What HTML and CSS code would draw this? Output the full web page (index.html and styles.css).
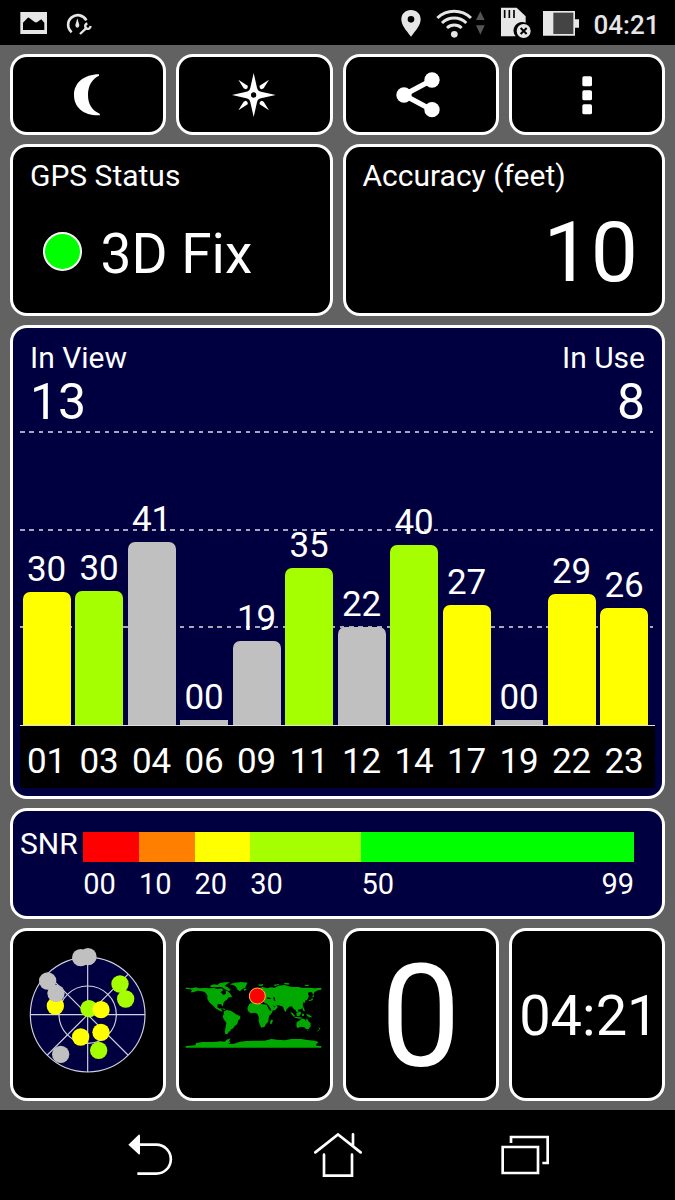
FILE: index.html
```html
<!DOCTYPE html>
<html lang="en">
  <head>
    <meta charset="UTF-8" />
    <meta name="viewport" content="width=device-width, initial-scale=1.0" />
    <title>GPS Status</title>
    <link rel="stylesheet" href="styles.css">
  </head>
  <body>
    <header class="status">
      <svg class="status__icon status__icon--image" viewBox="60 0 82 135">
        <path fill-rule="evenodd" d="M61 36H142V102H61ZM69 90H133V68L124 58L116 63Q110 70 104 66L88 54Q85 51 82 55L69 68Z" />
      </svg>
      <svg class="status__icon status__icon--gauge" viewBox="197 0 78 135">
        <path class="line" stroke-width="8" d="M214 97A29 29 0 1 1 258 61" />
        <path d="M231 55L237 75Q237 83 231 83Q225 83 225 75Z" />
        <path class="line" stroke-width="7" d="M239 102L257 85" />
        <path class="line" stroke-width="7" d="M261 70Q253 73 255 81Q258 89 266 86Q270 84 271 78" />
      </svg>
      <svg class="status__icon status__icon--pin" viewBox="197 0 60 135">
        <path fill-rule="evenodd" d="M227 30C210 30 198 42 198 58C198 75 211 90 227 110C243 90 256 75 256 58C256 42 244 30 227 30ZM227 48A10 10 0 1 1 227 68A10 10 0 1 1 227 48Z" />
      </svg>
      <svg class="status__icon status__icon--wifi" viewBox="303 0 109 135">
        <path class="line" stroke-width="9" d="M307 54A73 73 0 0 1 408 54M321 69A52 52 0 0 1 394 69M336 84A32 32 0 0 1 380 84" />
        <circle cx="358" cy="103" r="10" />
      </svg>
      <svg class="status__icon status__icon--arrows" viewBox="424 0 26 135">
        <path fill="#555" d="M437 34L450 60H424ZM437 104L450 76H424Z" />
      </svg>
      <svg class="status__icon status__icon--sd" viewBox="497 0 90 135">
        <path d="M497 23H544L571 49V68A26 26 0 0 0 541 109H497Z" />
        <path stroke="#000" stroke-width="5" d="M508 30V54M522 30V54M536 30V54" />
        <circle cx="565" cy="93" r="21" />
        <path stroke="#000" stroke-width="6" d="M556 84L574 102M574 84L556 102" />
      </svg>
      <svg class="status__icon status__icon--battery" viewBox="623 0 108 135">
        <path d="M623 33H719V58H731V83H719V107H623Z" />
        <path fill="#444" d="M654 38H714V102H654Z" />
      </svg>
      <span class="status__clock">04:21</span>
    </header>

    <main class="board">
      <button class="panel panel--btn" aria-label="Night mode">
        <svg class="icon" viewBox="186 212 156 144">
          <path d="M297 222C252 222 222 248 222 284C222 322 252 347 300 345L299 340C276 331 264 311 264 284C264 255 277 235 297 226Z" />
        </svg>
      </button>
      <button class="panel panel--btn" aria-label="Compass">
        <svg class="icon" viewBox="685 212 156 144">
          <path fill-rule="evenodd" d="M762 218L772 262Q774 272 784 274L828 284L784 294Q774 296 772 306L762 350L752 306Q750 296 740 294L697 284L740 274Q750 272 752 262ZM762 276A8 8 0 1 0 762 292A8 8 0 1 0 762 276Z" />
          <path d="M716 238L744 256Q746 265 738 267L732 264ZM808 238L780 256Q778 265 786 267L792 264ZM716 330L744 312Q746 303 738 301L732 304ZM808 330L780 312Q778 303 786 301L792 304Z" />
        </svg>
      </button>
      <button class="panel panel--btn" aria-label="Share">
        <svg class="icon" viewBox="179 212 156 144">
          <path class="line" stroke="#fff" stroke-width="16" d="M290 239L206 284L290 329" />
          <circle cx="290" cy="239" r="23" />
          <circle cx="206" cy="284" r="23" />
          <circle cx="290" cy="328" r="23" />
        </svg>
      </button>
      <button class="panel panel--btn" aria-label="Menu">
        <svg class="icon" viewBox="677 212 156 144">
          <rect x="741" y="228" width="29" height="30" rx="5" />
          <rect x="741" y="270" width="29" height="30" rx="5" />
          <rect x="741" y="312" width="29" height="30" rx="5" />
        </svg>
      </button>

      <section class="panel panel--info">
        <h2 class="label">GPS Status</h2>
        <div class="fix"><span class="fix__light"></span>3D Fix</div>
      </section>
      <section class="panel panel--info">
        <h2 class="label">Accuracy (feet)</h2>
        <div class="accuracy">10</div>
      </section>

      <section class="panel panel--wide chart">
        <div class="chart__head">
          <div>
            <h2 class="label">In View</h2>
            <div class="chart__count">13</div>
          </div>
          <div class="chart__used">
            <h2 class="label">In Use</h2>
            <div class="chart__count">8</div>
          </div>
        </div>
        <div class="chart__plot">
          <div class="sat">30<div class="bar bar--yellow" style="height: 133.5px"></div></div>
          <div class="sat">30<div class="bar bar--lime" style="height: 134.5px"></div></div>
          <div class="sat">41<div class="bar" style="height: 183px"></div></div>
          <div class="sat">00<div class="bar bar--none" style="height: 5px"></div></div>
          <div class="sat">19<div class="bar" style="height: 84.5px"></div></div>
          <div class="sat">35<div class="bar bar--lime" style="height: 157px"></div></div>
          <div class="sat">22<div class="bar" style="height: 98.5px"></div></div>
          <div class="sat">40<div class="bar bar--lime" style="height: 180.5px"></div></div>
          <div class="sat">27<div class="bar bar--yellow" style="height: 120.5px"></div></div>
          <div class="sat">00<div class="bar bar--none" style="height: 5px"></div></div>
          <div class="sat">29<div class="bar bar--yellow" style="height: 131.5px"></div></div>
          <div class="sat">26<div class="bar bar--yellow" style="height: 117.5px"></div></div>
        </div>
        <div class="chart__axis">
          <span>01</span>
          <span>03</span>
          <span>04</span>
          <span>06</span>
          <span>09</span>
          <span>11</span>
          <span>12</span>
          <span>14</span>
          <span>17</span>
          <span>19</span>
          <span>22</span>
          <span>23</span>
        </div>
      </section>

      <section class="panel panel--wide snr">
        <h2 class="snr__title">SNR</h2>
        <div class="snr__scale">
          <div class="snr__step snr__step--red">00</div>
          <div class="snr__step snr__step--orange">10</div>
          <div class="snr__step snr__step--yellow">20</div>
          <div class="snr__step snr__step--lime">30</div>
          <div class="snr__step snr__step--green"><span>50</span><span>99</span></div>
        </div>
      </section>

      <section class="panel panel--tile">
        <svg class="sky" viewBox="54 51 360 408">
          <g class="sky__grid">
            <circle cx="233" cy="254" r="172" fill="#000040" />
            <circle cx="233" cy="254" r="86" />
            <path d="M61 254H405M233 82V426M112 133L354 375M354 133L112 375" />
          </g>
          <g fill="#c0c0c0">
            <circle cx="212" cy="83" r="26" />
            <circle cx="234" cy="80" r="26" />
            <circle cx="113" cy="153" r="26" />
            <circle cx="152" cy="373" r="26" />
          </g>
          <g fill="#a6ff00">
            <circle cx="330" cy="162" r="26" />
            <circle cx="347" cy="207" r="26" />
            <circle cx="237" cy="236" r="26" />
            <circle cx="266" cy="361" r="26" />
          </g>
          <g fill="#ff0">
            <circle cx="136" cy="228" r="26" />
            <circle cx="273" cy="239" r="26" />
            <circle cx="273" cy="307" r="26" />
            <circle cx="212" cy="321" r="26" />
          </g>
          <circle cx="138" cy="190" r="26" fill="#c0c0c0" />
        </svg>
      </section>
      <section class="panel panel--tile">
        <svg class="map" viewBox="28 58 420 211">
          <g fill="#00a800">
            <!-- North America -->
            <path d="M32 84L40 84L52 86L62 83L74 86L92 85L104 86L118 85L128 88L140 86L146 91L138 98L146 106L154 102L153 92L162 97L170 107L172 113L162 113L158 119L150 125L146 131L145 138L142 139L139 133L129 134L128 143L135 147L140 145L140 151L146 156L136 154L124 147L117 140L105 129L98 118L98 107L90 97L78 94L68 93L56 98L46 98L52 93L48 89L34 88Z" />
            <path d="M106 78L118 74L128 76L134 71L150 68L166 68L156 74L150 79L158 82L168 90L162 95L150 88L140 82L122 83L108 82Z" />
            <path d="M164 74L180 69L200 67L219 69L214 78L212 84L203 88L196 95L189 91L184 81L176 76Z" />
            <path d="M206 89L214 87L216 91L209 93ZM143 146L152 148L150 151L144 149Z" />
            <!-- South America -->
            <path d="M148 155L156 151L168 153L178 159L184 164L197 170L196 177L190 184L188 193L180 199L176 206L169 209L167 214L162 216L158 224L152 223L150 216L153 202L155 189L148 180L144 171L147 163Z" />
            <!-- Africa -->
            <path d="M224 132L242 128L247 133L262 133L276 135L282 147L286 153L295 152L291 161L284 168L282 176L281 186L274 193L270 201L260 204L255 194L252 184L253 174L249 164L242 159L228 161L220 154L218 145Z" />
            <path d="M292 179L295 183L290 194L286 192L287 184Z" />
            <!-- Europe and Asia -->
            <path d="M238 100L248 92L254 86L264 82L278 86L288 83L300 84L312 78L330 76L340 79L352 82L372 82L384 85L402 84L420 86L440 84L440 90L430 92L420 97L416 105L412 98L402 98L400 103L403 110L397 121L391 123L392 130L387 128L384 133L386 141L379 149L370 150L372 158L366 158L363 151L358 149L351 140L344 141L336 149L333 157L328 151L325 141L313 137L305 137L310 142L302 151L290 153L283 143L278 133L270 130L264 124L258 130L248 124L240 128L229 129L227 122L234 114L230 107Z" />
            <path d="M230 98L235 96L239 109L230 111ZM250 75L266 73L264 78L254 79ZM297 75L314 73L312 76L300 79ZM328 69L344 71L342 75L330 74ZM390 76L402 75L402 79L392 79Z" />
            <!-- Japan, islands of South-East Asia -->
            <path d="M414 108L418 106L418 112L413 113ZM413 114L415 121L404 125L400 124L410 119ZM384 139L388 145L391 154L387 155L383 147Z" />
            <path d="M347 156L355 161L361 169L357 171L350 163ZM365 161L376 155L380 160L374 170L366 168ZM358 171L376 173L388 176L376 177L360 174ZM382 162L388 162L388 168L382 170ZM394 163L404 165L413 173L404 173L397 168Z" />
            <!-- Australia, New Zealand -->
            <path d="M366 187L374 183L380 178L390 178L393 183L397 176L401 184L408 191L408 200L402 208L394 208L389 203L380 201L368 205L365 199ZM397 210L402 210L400 214ZM432 203L438 207L434 210ZM431 210L434 211L427 217Z" />
            <!-- Antarctica -->
            <path d="M33 264V259L62 257L64 250L84 247L118 247L138 245L150 246L156 240L168 236L164 242L166 249L160 253L178 252L196 246L216 244L246 243L270 243L290 238L308 240L330 242L350 238L380 238L398 241L420 243L432 247L426 252L424 258L440 259V264Z" />
          </g>
          <!-- Black Sea, Caspian, Red Sea, Baltic -->
          <path d="M276 113L286 114L290 117L278 118ZM295 112L300 113L302 123L298 123ZM278 135L281 136L290 151L286 150ZM262 94L267 91L265 102L260 103ZM293 136L303 141L300 143Z" />
          <circle cx="248" cy="109" r="24" fill="#f00" stroke="#ffbd3c" stroke-width="3" />
        </svg>
      </section>
      <section class="panel panel--tile speed">0</section>
      <section class="panel panel--tile clock">04:21</section>
    </main>

    <nav class="nav">
      <svg class="nav__icon" viewBox="48 0 147 270">
        <path class="line" d="M82 191H139A43 43 0 0 0 139 104H86" />
        <path fill="#fff" d="M55 104L86 74Q90 73 90 78V130Q90 135 86 133Z" />
      </svg>
      <svg class="nav__icon" viewBox="609 0 147 270">
        <path class="line" stroke-linecap="round" d="M616 127L684 73L752 127M729 73V106M642 134V197H726V134" />
      </svg>
      <svg class="nav__icon" viewBox="1173 0 147 270">
        <path class="line" d="M1178 111H1284V189H1178ZM1203 99V81H1313V159H1297" />
      </svg>
    </nav>
  </body>
</html>
```

FILE: styles.css
```css
*,
*::before,
*::after {
  box-sizing: border-box;
  margin: 0;
  padding: 0;
}

:root {
  --navy: #000040;
  --silver: #c0c0c0;
  --lime: #a6ff00;
  --yellow: #ff0;
}

body {
  display: flex;
  flex-direction: column;
  height: 1200px;
  background-color: #000;
  color: #fff;
  font-family: Roboto, sans-serif;
  overflow: hidden;
}

svg {
  display: block;
  flex: none;
}

.line {
  fill: none;
}

/* status bar */
.status {
  display: flex;
  align-items: center;
  height: 45px;
  padding: 0 17px 0 20px;
  flex: none;
}
.status__icon {
  height: 45px;
  fill: #e6e6e6;
}
.status__icon .line {
  fill: none;
  stroke: #e6e6e6;
}
.status__icon--image {
  width: 27.3px;
}
.status__icon--gauge {
  width: 26px;
  margin-left: 18.3px;
}
.status__icon--pin {
  width: 20px;
  margin-left: auto;
}
.status__icon--wifi {
  width: 36.3px;
  margin-left: 15.3px;
}
.status__icon--arrows {
  width: 8.7px;
  margin-left: 4px;
}
.status__icon--sd {
  width: 30px;
  margin-left: 15.7px;
}
.status__icon--battery {
  width: 36px;
  margin-left: 12px;
}
.status__clock {
  width: 64.5px;
  margin-left: 15px;
  padding-top: 4px;
  color: #e6e6e6;
  font-size: 26px;
  font-weight: 500;
  line-height: 30px;
}

/* panels */
.board {
  display: grid;
  grid-template-columns: repeat(4, 1fr);
  grid-template-rows: 81px 172px 474px 111px 173px;
  gap: 9px 10px;
  flex: none;
  height: 1065px;
  padding: 9px 10px;
  background-color: #626262;
}
.panel {
  min-width: 0;
  border: 3px solid #fff;
  border-radius: 17px;
  background-color: #000;
  color: #fff;
}
.panel--btn,
.panel--tile {
  display: flex;
  align-items: center;
  justify-content: center;
}
.panel--info {
  grid-column: span 2;
  padding: 12px 24px 0 17px;
}
.panel--wide {
  grid-column: 1 / -1;
  background-color: var(--navy);
}
.icon {
  width: 52px;
  height: 48px;
  fill: #fff;
}
.icon .line {
  fill: none;
}
.label {
  font-size: 30px;
  font-weight: 400;
  line-height: 34px;
}

.fix {
  display: flex;
  align-items: center;
  gap: 19px;
  margin-top: 31px;
  padding-left: 12.5px;
  font-size: 55px;
  line-height: 60px;
}
.fix__light {
  width: 39px;
  height: 39px;
  margin-top: -5px;
  border: 2px solid #fff;
  border-radius: 50%;
  background-color: #0f0;
}
.accuracy {
  margin-top: 15px;
  font-size: 84px;
  line-height: 90px;
  text-align: right;
}

/* satellites */
.chart {
  padding: 13px 7px 0;
}
.chart__head {
  display: flex;
  justify-content: space-between;
  height: 90px;
  padding: 0 10px;
}
.chart__used {
  text-align: right;
}
.chart__count {
  font-size: 50px;
  line-height: 54px;
}
.chart__plot,
.chart__axis {
  display: flex;
  gap: 4.5px;
  padding-left: 2.6px;
  font-size: 35px;
  line-height: 40px;
  text-align: center;
}
.chart__plot {
  --dash: repeating-linear-gradient(90deg, #a8a8bd 0 4.7px, transparent 4.7px 9.4px);
  align-items: flex-end;
  height: 295px;
  border-bottom: 1px solid #e0e0e0;
  background-image: var(--dash), var(--dash), var(--dash);
  background-position: 0 0, 0 98px, 0 195px;
  background-size: 633px 2px;
  background-repeat: no-repeat;
}
.chart__axis {
  height: 62px;
  padding-top: 16px;
  background-color: #000;
}
.chart__axis span {
  width: 48px;
  flex: none;
}
.sat {
  width: 48px;
  flex: none;
}
.bar {
  margin-top: 2px;
  border-radius: 7px 7px 0 0;
  background-color: var(--silver);
}
.bar--yellow {
  background-color: var(--yellow);
}
.bar--lime {
  background-color: var(--lime);
}
.bar--none {
  border-radius: 0;
}

/* signal scale */
.snr {
  display: flex;
  padding: 20.5px 28px 0 7px;
  font-size: 29px;
  line-height: 34px;
}
.snr__title {
  width: 63.3px;
  margin-top: -4.5px;
  flex: none;
  font-size: 30px;
  font-weight: 400;
}
.snr__scale {
  display: flex;
  flex: 1;
}
.snr__step {
  flex: 10 1 0;
  min-width: 0;
}
.snr__step::before {
  content: "";
  display: block;
  width: 100%;
  height: 30px;
  margin-bottom: 5px;
  background-color: #f00;
}
.snr__step--orange::before {
  background-color: #ff8000;
}
.snr__step--yellow::before {
  background-color: var(--yellow);
}
.snr__step--lime {
  flex-grow: 20;
}
.snr__step--lime::before {
  background-color: var(--lime);
}
.snr__step--green {
  display: flex;
  flex-wrap: wrap;
  justify-content: space-between;
  align-content: flex-start;
  flex-grow: 49;
}
.snr__step--green::before {
  background-color: #0f0;
}

/* bottom tiles */
.sky {
  width: 120px;
  height: 136px;
}
.sky__grid {
  fill: none;
  stroke: #d0d0e0;
  stroke-width: 3.5;
}
.map {
  width: 140px;
  height: 70.3px;
}
.speed {
  padding-top: 6px;
  font-size: 143px;
  line-height: 161px;
}
.clock {
  padding: 2px 0 0 4px;
  font-size: 56px;
  line-height: 64px;
}

/* navigation */
.nav {
  display: grid;
  grid-template-columns: repeat(3, 187.5px);
  justify-content: center;
  justify-items: center;
}
.nav__icon {
  width: 49px;
  height: 90px;
}
.nav__icon .line {
  stroke: #fff;
  stroke-width: 8;
}
```
